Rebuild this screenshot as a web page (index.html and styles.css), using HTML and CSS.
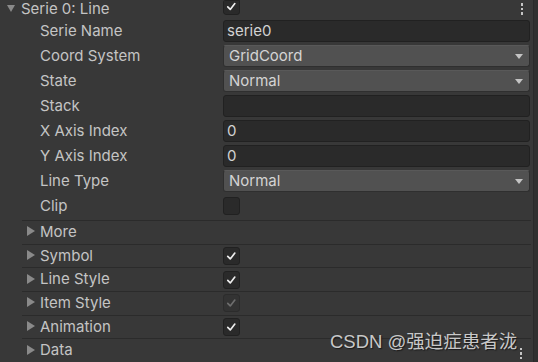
FILE: index.html
```html
<!DOCTYPE html>
<html>
<head>
<meta charset="utf-8">
<link rel="stylesheet" href="styles.css">
</head>
<body>
<div class="inspector">
  <div class="panel">
    <div class="row first">
      <div class="label head"><span class="tri-down"></span>Serie 0: Line</div>
      <div class="field flexfield top">
        <span class="checkbox"><svg viewBox="0 0 18 18"><polyline points="4.5,9.5 7.5,12.5 13,5.5"/></svg></span>
        <span class="kebab"><i></i><i></i><i></i></span>
      </div>
    </div>
    <div class="row"><div class="label">Serie Name</div><div class="field text">serie0</div></div>
    <div class="row"><div class="label">Coord System</div><div class="field drop">GridCoord<span class="arrow"></span></div></div>
    <div class="row"><div class="label">State</div><div class="field drop">Normal<span class="arrow"></span></div></div>
    <div class="row"><div class="label">Stack</div><div class="field text"></div></div>
    <div class="row"><div class="label">X Axis Index</div><div class="field text">0</div></div>
    <div class="row"><div class="label">Y Axis Index</div><div class="field text">0</div></div>
    <div class="row"><div class="label">Line Type</div><div class="field drop">Normal<span class="arrow"></span></div></div>
    <div class="row"><div class="label">Clip</div><div class="field flexfield"><span class="checkbox"></span></div></div>

    <div class="section"><div class="slabel"><span class="tri-right"></span>More</div></div>
    <div class="section"><div class="slabel"><span class="tri-right"></span>Symbol</div><span class="checkbox"><svg viewBox="0 0 18 18"><polyline points="4.5,9.5 7.5,12.5 13,5.5"/></svg></span></div>
    <div class="section"><div class="slabel"><span class="tri-right"></span>Line Style</div><span class="checkbox"><svg viewBox="0 0 18 18"><polyline points="4.5,9.5 7.5,12.5 13,5.5"/></svg></span></div>
    <div class="section"><div class="slabel"><span class="tri-right"></span>Item Style</div><span class="checkbox disabled"><svg viewBox="0 0 18 18"><polyline points="4.5,9.5 7.5,12.5 13,5.5"/></svg></span></div>
    <div class="section"><div class="slabel"><span class="tri-right"></span>Animation</div><span class="checkbox"><svg viewBox="0 0 18 18"><polyline points="4.5,9.5 7.5,12.5 13,5.5"/></svg></span></div>
    <div class="section"><div class="slabel"><span class="tri-right"></span>Data</div><span class="kebab end"><i></i><i></i><i></i></span></div>
  </div>
  <div class="scrollbar"></div>
  <div class="watermark">CSDN @强迫症患者泷</div>
</div>
</body>
</html>
```

FILE: styles.css
```css
* { box-sizing: border-box; }
html, body { margin: 0; padding: 0; }
body {
  width: 538px;
  height: 362px;
  overflow: hidden;
  background: #383838;
  font-family: Inter, "Noto Sans", sans-serif;
  font-size: 15px;
  color: #c4c4c4;
}
.inspector {
  position: relative;
  display: flex;
  width: 538px;
  height: 362px;
  overflow: hidden;
}
.panel {
  width: 533px;
  display: flex;
  flex-direction: column;
}
.scrollbar {
  width: 5px;
  background: #303030;
  border-left: 1px solid #2a2a2a;
}
.row {
  display: flex;
  align-items: center;
  height: 22px;
  margin-bottom: 3px;
  line-height: 16px;
}
.row.first {
  height: 17px;
  align-items: flex-start;
}
.label {
  width: 223px;
  flex: none;
  padding-left: 40px;
  white-space: nowrap;
}
.label.head {
  padding-left: 7px;
  display: flex;
  align-items: center;
  height: 16px;
  margin-top: 1px;
}
.tri-down {
  width: 0; height: 0;
  border-left: 4.5px solid transparent;
  border-right: 4.5px solid transparent;
  border-top: 7px solid #8a8a8a;
  margin-right: 6px;
  margin-top: -2px;
}
.field {
  width: 307px;
  height: 22px;
  flex: none;
  border-radius: 3px;
  display: flex;
  align-items: center;
  white-space: nowrap;
}
.field.top {
  height: 15px;
  align-items: flex-start;
  overflow: hidden;
}
.field.top .checkbox {
  border-top-left-radius: 0;
  border-top-right-radius: 0;
  height: 15px;
  align-items: flex-end;
}
.field.top .checkbox svg {
  height: 15px;
}
.field.text {
  background: #2a2a2a;
  border: 1px solid #212121;
  padding-left: 3px;
  color: #d2d2d2;
}
.field.drop {
  background: #515151;
  border: 1px solid #2f2f2f;
  border-top-color: #595959;
  padding-left: 5px;
  padding-right: 6px;
  color: #d4d4d4;
  justify-content: space-between;
}
.arrow {
  width: 0; height: 0;
  border-left: 4.5px solid transparent;
  border-right: 4.5px solid transparent;
  border-top: 5px solid #c4c4c4;
}
.flexfield {
  padding-right: 7px;
}
.checkbox {
  width: 17px;
  height: 18px;
  flex: none;
  background: #2a2a2a;
  border: 1px solid #212121;
  border-radius: 3px;
  display: flex;
  align-items: center;
  justify-content: center;
}
.checkbox svg {
  width: 17px;
  height: 18px;
  fill: none;
  stroke: #eeeeee;
  stroke-width: 2;
  stroke-linecap: round;
  stroke-linejoin: round;
}
.checkbox.disabled {
  background: #333333;
  border-color: #2c2c2c;
}
.checkbox.disabled svg { stroke: #6e6e6e; }
.kebab {
  margin-left: auto;
  display: flex;
  flex-direction: column;
  gap: 2px;
  align-items: center;
}
.field.top .kebab { margin-top: 3px; }
.kebab i {
  display: block;
  width: 2.5px;
  height: 2.5px;
  background: #c4c4c4;
}
.kebab.end { margin-right: 9px; margin-top: 6px; }
.section {
  margin-left: 22px;
  width: 509px;
  height: 24px;
  border-top: 1px solid #2b2b2b;
  display: flex;
  align-items: center;
}
.slabel {
  width: 201px;
  flex: none;
  display: flex;
  align-items: center;
  padding-left: 5px;
  white-space: nowrap;
  margin-top: -2px;
}
.tri-right {
  width: 0; height: 0;
  border-top: 5px solid transparent;
  border-bottom: 5px solid transparent;
  border-left: 8px solid #8a8a8a;
  margin-right: 5px;
}
.watermark {
  position: absolute;
  left: 330px;
  top: 327px;
  font-family: "Liberation Sans", "Noto Sans CJK SC", sans-serif;
  font-size: 18.5px;
  color: #c8c8c8;
  text-shadow: 1px 1px 1px #1a1a1a;
  white-space: nowrap;
}
```
